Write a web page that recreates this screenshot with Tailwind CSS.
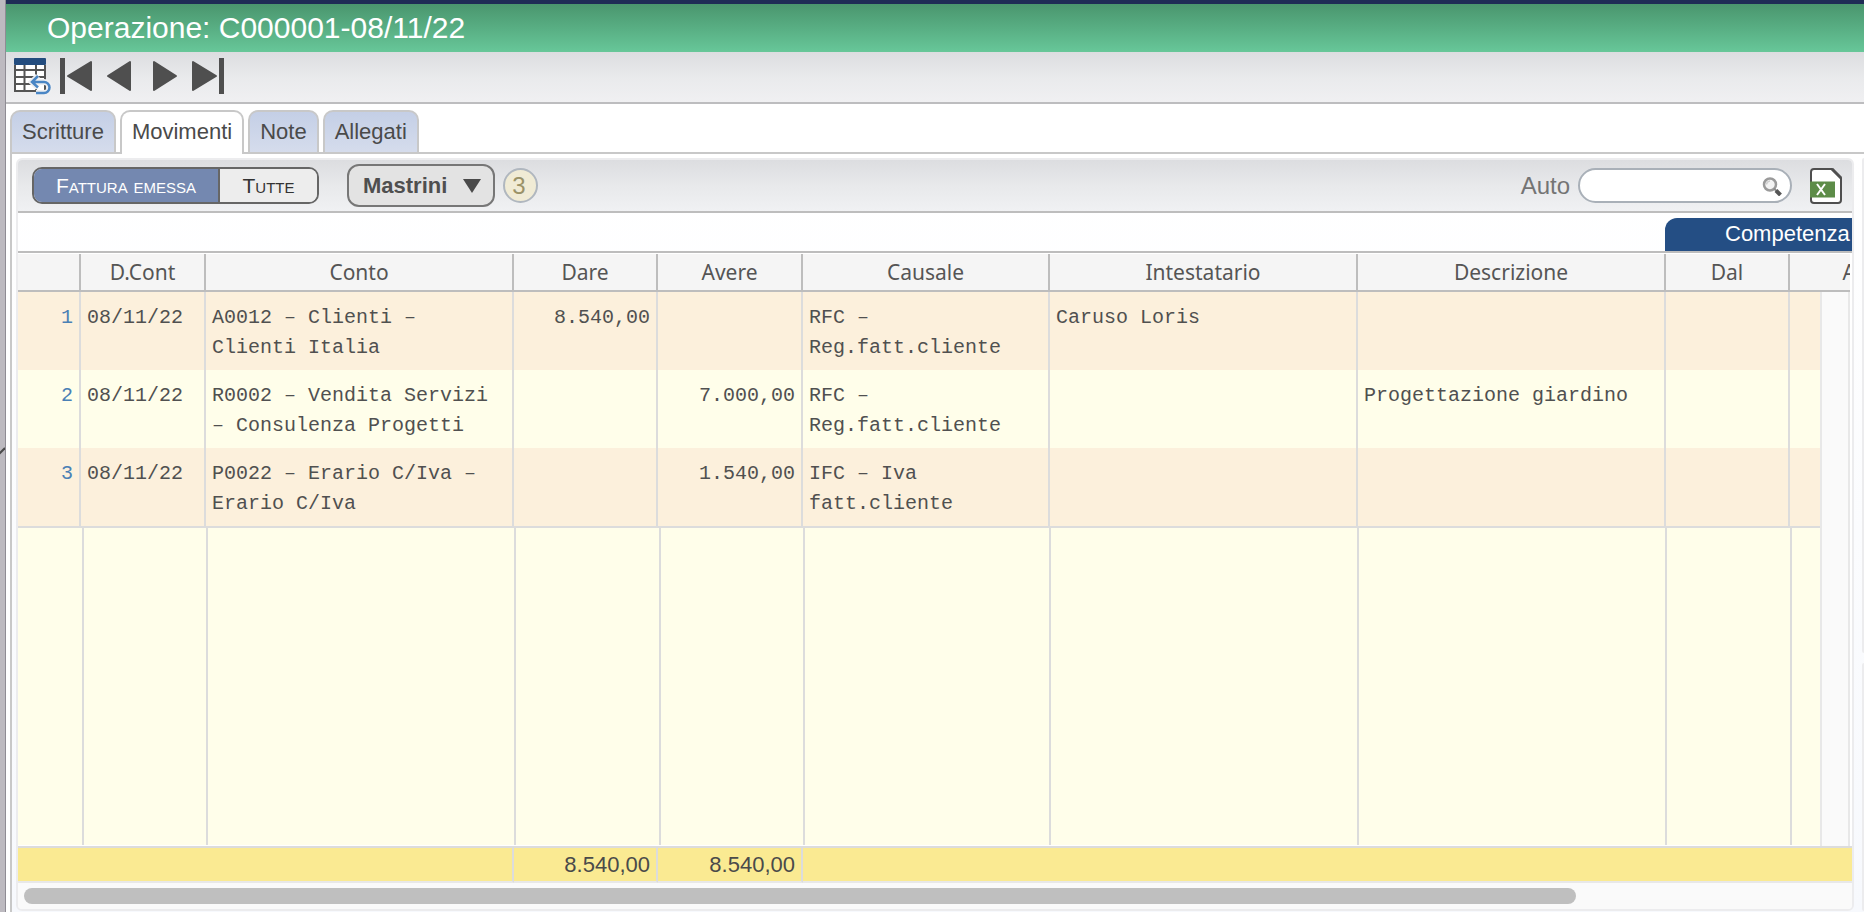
<!DOCTYPE html>
<html lang="it">
<head>
<meta charset="utf-8">
<title>Operazione: C000001-08/11/22</title>
<script src="https://cdn.jsdelivr.net/npm/@tailwindcss/browser@4"></script>
</head>
<body class="flex h-screen overflow-hidden bg-white font-['Liberation_Sans',sans-serif] text-[22px] leading-7 text-[#4a4a4a]">
  <aside class="flex w-[6px] shrink-0 items-center overflow-hidden border-r border-[#8f8c94] bg-[#bdbac0]">
    <svg class="h-6 w-[5px]" viewBox="0 0 5 24" fill="none" stroke="#4a4a4a" stroke-width="2"><path d="M-1 10 5 4"/></svg>
  </aside>

  <div class="flex min-w-0 flex-1 flex-col">
    <header class="flex h-[52px] shrink-0 items-center border-t-4 border-[#1f2d56] bg-linear-to-b from-[#4a966e] to-[#67c799] px-[41px]">
      <h1 class="text-[30px] leading-8 text-white">Operazione: C000001-08/11/22</h1>
    </header>

    <nav aria-label="Navigazione" class="flex h-[52px] shrink-0 items-center gap-1 border-b-2 border-[#bdbdbf] bg-linear-to-b from-[#dcdde0] via-[#e9eaec] to-[#f0f0f2] px-[6px] pb-[2px]">
      <button aria-label="Elenco" class="size-10">
        <svg class="size-10" viewBox="0 0 40 40" fill="none">
          <rect x="3" y="4" width="30" height="31" fill="#fff"/>
          <path d="M3 9V35H33V9M3 14H33M3 21H33M3 28H33M12.500 9V35M24 9V35" stroke="#555" stroke-width="2"/>
          <rect x="2" y="2" width="32" height="7" rx="1" fill="#234c7e"/>
          <path d="M26 20 20 26 26 31.500M21 26H32a5.500 5.500 0 0 1 0 11H24" stroke="#eeeff1" stroke-width="6"/>
          <path d="M26 20 20 26 26 31.500M21 26H32a5.500 5.500 0 0 1 0 11H24" stroke="#4a86c5" stroke-width="2.500"/>
        </svg>
      </button>
      <button aria-label="Primo" class="size-10">
        <svg class="size-10" viewBox="0 0 40 40" fill="#4f4f4f"><path d="M4 2h5v36H4z"/><path d="M12 20 35 6V34Z" stroke="#4f4f4f" stroke-width="2" stroke-linejoin="round"/></svg>
      </button>
      <button aria-label="Precedente" class="size-10">
        <svg class="size-10" viewBox="0 0 40 40" fill="#4f4f4f"><path d="M8 20 30 6V34Z" stroke="#4f4f4f" stroke-width="2" stroke-linejoin="round"/></svg>
      </button>
      <button aria-label="Successivo" class="size-10">
        <svg class="size-10" viewBox="0 0 40 40" fill="#4f4f4f"><path d="M32 20 10 6V34Z" stroke="#4f4f4f" stroke-width="2" stroke-linejoin="round"/></svg>
      </button>
      <button aria-label="Ultimo" class="size-10">
        <svg class="size-10" viewBox="0 0 40 40" fill="#4f4f4f"><path d="M28 20 5 6V34Z" stroke="#4f4f4f" stroke-width="2" stroke-linejoin="round"/><path d="M31 2h5v36h-5z"/></svg>
      </button>
    </nav>

    <div class="ml-1 mt-[6px] flex h-11 shrink-0 items-stretch gap-1 border-b-2 border-[#c8c8c8]" role="tablist">
      <button role="tab" class="rounded-t-[10px] border-2 border-b-0 border-[#c8c8c8] bg-linear-to-b from-[#c4cfe6] to-[#d5dcec] px-[10px]">Scritture</button>
      <button role="tab" aria-selected="true" class="-mb-[2px] rounded-t-[10px] border-2 border-b-0 border-[#c8c8c8] bg-white px-[10px] pb-[2px]">Movimenti</button>
      <button role="tab" class="rounded-t-[10px] border-2 border-b-0 border-[#c8c8c8] bg-linear-to-b from-[#c4cfe6] to-[#d5dcec] px-[10px]">Note</button>
      <button role="tab" class="rounded-t-[10px] border-2 border-b-0 border-[#c8c8c8] bg-linear-to-b from-[#c4cfe6] to-[#d5dcec] px-[10px]">Allegati</button>
    </div>

    <div class="ml-1 flex min-h-0 flex-1 gap-2 border-l-2 border-[#c8c8c8] bg-linear-to-b from-white to-[#f7f9fd] pb-px pl-1 pt-1">
      <main class="flex min-w-0 flex-1 flex-col overflow-hidden rounded-md border-2 border-[#ececee]">
        <div class="flex h-[53px] shrink-0 items-center border-b-2 border-[#bdbdbd] bg-linear-to-b from-[#dcdde0] via-[#e8e9eb] to-[#f0f1f3] pl-[14px] pr-[10px]">
          <div class="flex h-[37px] overflow-hidden rounded-[10px] border-2 border-[#666] text-[21px] [font-variant:small-caps]">
            <button class="w-[184px] bg-[#7488b0] text-white">Fattura emessa</button>
            <button class="w-[99px] border-l-2 border-[#666] bg-[#ededed] text-[#333]">Tutte</button>
          </div>
          <button class="ml-7 flex h-[43px] items-center gap-[16px] rounded-xl border-2 border-[#777] bg-[#e3e3e3] pl-[14px] pr-3 font-bold text-[#4f4f4f]">
            Mastrini
            <svg class="h-[14px] w-[18px]" viewBox="0 0 18 14" fill="#4a4a4a"><path d="M0 0h18L9 14z"/></svg>
          </button>
          <span class="ml-2 flex size-[35px] items-center justify-center rounded-full border-2 border-[#b0b7bf] bg-[#f0ebd5] pr-1 text-[24px] text-[#9a9268]">3</span>

          <label for="auto" class="ml-auto text-[24px] text-[#747474]">Auto</label>
          <div class="ml-2 flex h-[35px] w-[214px] items-center rounded-full border-2 border-[#a9b0b8] bg-white pr-2">
            <input id="auto" type="text" class="min-w-0 flex-1 bg-transparent pl-4 outline-none">
            <svg class="size-5" viewBox="0 0 20 20" fill="none"><circle cx="8" cy="8.500" r="6" fill="#f3f3f3" stroke="#9a9a9a" stroke-width="2.500"/><path d="M4.500 8.500a4 4 0 0 1 3.500-3.500" stroke="#cfcfcf" stroke-width="1.500"/><path d="m12 12.500 2.500 2.500" stroke="#8b8b8b" stroke-width="2"/><path d="m14 14.500 4.500 4.500" stroke="#555" stroke-width="4"/></svg>
          </div>
          <button aria-label="Esporta in Excel" class="ml-[18px]">
            <svg class="h-9 w-8" viewBox="0 0 32 36" fill="none"><path d="M4 1H22L31 10V32a3 3 0 0 1-3 3H4a3 3 0 0 1-3-3V4a3 3 0 0 1 3-3Z" fill="#fff" stroke="#4f4f4f" stroke-width="2"/><path d="M22 1 31 10" stroke="#4f4f4f" stroke-width="3"/><path d="M0 13.500h25v16H0z" fill="#5d8c48"/><path d="m7 16 8 11M15 16 7 27" stroke="#fff" stroke-width="2"/></svg>
          </button>
        </div>

        <div class="flex h-[40px] shrink-0 items-end justify-end border-b-2 border-[#bdbdbd]">
          <div class="h-[33px] w-[187px] overflow-hidden whitespace-nowrap rounded-tl-xl bg-[#244e84] pl-[60px] pt-[2px] text-white">Competenza</div>
        </div>

        <div class="min-h-0 flex-1 bg-white pt-px">
          <table class="h-full w-full table-fixed border-separate border-spacing-0">
            <colgroup>
              <col class="w-[63px]"><col class="w-[125px]"><col class="w-[308px]"><col class="w-[144px]"><col class="w-[145px]"><col class="w-[247px]"><col class="w-[308px]"><col><col class="w-[124px]"><col class="w-[30px]"><col class="w-[30px]"><col class="w-[2px]">
            </colgroup>
            <thead class="font-['Noto_Sans',sans-serif] text-[21px] text-[#555]">
              <tr class="h-[38px] [&>th]:border-b-2 [&>th]:border-r-2 [&>th]:border-[#bdbdbd] [&>th]:bg-[#f5f5f5] [&>th]:p-0 [&>th]:font-normal">
                <th></th><th scope="col">D.Cont</th><th scope="col">Conto</th><th scope="col">Dare</th><th scope="col">Avere</th><th scope="col">Causale</th><th scope="col">Intestatario</th><th scope="col">Descrizione</th><th scope="col">Dal</th>
                <th scope="col" colspan="2" class="overflow-hidden border-r-0!"><div class="w-[124px] text-center">Al</div></th>
                <td></td>
              </tr>
            </thead>
            <tbody class="align-top font-['Liberation_Mono',monospace] text-[20px] leading-[30px] text-[#505050]">
              <tr class="h-[78px] bg-[#fcf0dc] [&>td]:border-r-2 [&>td]:border-[#dcdcdc] [&>td]:px-[6px] [&>td]:pt-[11px]">
                <td class="text-right text-[#4a80b5]">1</td><td>08/11/22</td><td>A0012 – Clienti – Clienti Italia</td><td class="text-right">8.540,00</td><td></td><td>RFC –<br>Reg.fatt.cliente</td><td>Caruso Loris</td><td></td><td></td><td class="border-r-0! p-0!"></td>
                <td rowspan="4" class="border-l-2 border-[#e8e8e8]! bg-[#fafafa] p-0!"></td><td rowspan="4" class="border-0! bg-white p-0!"></td>
              </tr>
              <tr class="h-[78px] bg-[#fffeea] [&>td]:border-r-2 [&>td]:border-[#dcdcdc] [&>td]:px-[6px] [&>td]:pt-[11px]">
                <td class="text-right text-[#4a80b5]">2</td><td>08/11/22</td><td>R0002 – Vendita Servizi – Consulenza Progetti</td><td></td><td class="text-right">7.000,00</td><td>RFC –<br>Reg.fatt.cliente</td><td></td><td>Progettazione giardino</td><td></td><td class="border-r-0! p-0!"></td>
              </tr>
              <tr class="h-[80px] bg-[#fcf0dc] [&>td]:border-b-2 [&>td]:border-r-2 [&>td]:border-[#dcdcdc] [&>td]:px-[6px] [&>td]:pt-[11px]">
                <td class="text-right text-[#4a80b5]">3</td><td>08/11/22</td><td>P0022 – Erario C/Iva – Erario C/Iva</td><td></td><td class="text-right">1.540,00</td><td>IFC – Iva fatt.cliente</td><td></td><td></td><td></td><td class="border-r-0! p-0!"></td>
              </tr>
              <tr>
                <td colspan="10" class="h-full border-b border-white bg-[#fffeea] p-0">
                  <div class="grid h-full grid-cols-[66px_124px_308px_145px_144px_246px_308px_1fr_125px_28px] [&>i]:border-r-2 [&>i]:border-[#dcdcdc]">
                    <i></i><i></i><i></i><i></i><i></i><i></i><i></i><i></i><i></i>
                  </div>
                </td>
              </tr>
            </tbody>
            <tfoot>
              <tr class="h-[37px] bg-[#faea92] text-right [&>td]:border-b-2 [&>td]:border-t-2 [&>td]:border-b-[#e8e8e8] [&>td]:border-t-[#dcdcdc] [&>td]:px-[6px] [&>td]:py-0">
                <td colspan="3" class="border-r-2 border-r-[#dcdcdc]"></td><td class="border-r-2 border-r-[#dcdcdc]">8.540,00</td><td class="border-r-2 border-r-[#dcdcdc]">8.540,00</td><td colspan="7"></td>
              </tr>
            </tfoot>
          </table>
        </div>

        <div class="flex h-[26px] shrink-0 items-center bg-[#fafafa] px-[6px]">
          <div class="h-4 w-[1552px] max-w-full rounded-full bg-[#bfbfbf]"></div>
        </div>
      </main>

      <div class="flex w-[2px] shrink-0 flex-col gap-[10px]">
        <div class="flex-2 rounded-l-sm bg-[#ececee]"></div>
        <div class="flex-1 rounded-l-sm bg-[#ececee]"></div>
      </div>
    </div>
  </div>
</body>
</html>
